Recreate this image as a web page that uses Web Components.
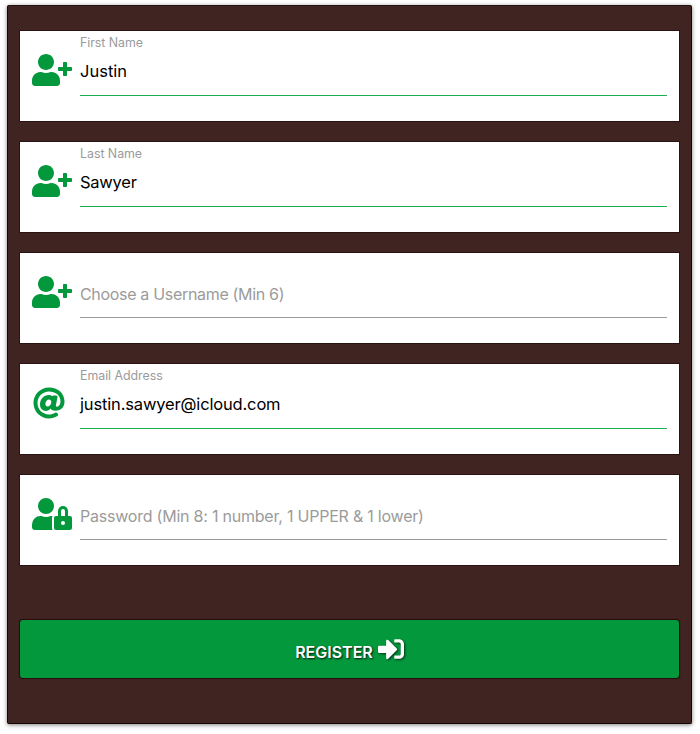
<!DOCTYPE html>
<html lang="en">
<head>
<meta charset="utf-8">
<title>Register</title>
<style>
html,body{margin:0;background:#fff}
body{width:700px;height:734px;overflow:hidden;font-family:Inter,"Liberation Sans",sans-serif}
</style>
</head>
<body>
<register-form>
  <form-field icon="plus" label="First Name" filled style="--space:0px">Justin</form-field>
  <form-field icon="plus" label="Last Name" filled style="--space:-.25px">Sawyer</form-field>
  <form-field icon="plus" style="--space:-.32px">Choose a Username (Min 6)</form-field>
  <form-field icon="at" label="Email Address" filled style="--space:-.16px">justin.sawyer@icloud.com</form-field>
  <form-field icon="lock" style="--space:-.22px">Password (Min 8: 1 number, 1 UPPER &amp; 1 lower)</form-field>
  <register-button slot="action">REGISTER</register-button>
</register-form>
<script>
const glyphs = {
  plus: [640, 'M624 208h-64v-64c0-8.8-7.2-16-16-16h-32c-8.8 0-16 7.2-16 16v64h-64c-8.8 0-16 7.2-16 16v32c0 8.8 7.2 16 16 16h64v64c0 8.8 7.2 16 16 16h32c8.8 0 16-7.2 16-16v-64h64c8.8 0 16-7.2 16-16v-32c0-8.8-7.2-16-16-16zm-400 48c70.7 0 128-57.3 128-128S294.7 0 224 0 96 57.3 96 128s57.3 128 128 128zm89.6 32h-16.7c-22.2 10.2-46.9 16-72.9 16s-50.6-5.8-72.9-16h-16.7C60.2 288 0 348.2 0 422.4V464c0 26.5 21.5 48 48 48h352c26.5 0 48-21.5 48-48v-41.6c0-74.2-60.2-134.4-134.4-134.4z'],
  lock: [640, 'M224 256A128 128 0 1 0 96 128a128 128 0 0 0 128 128zm96 64a63.08 63.08 0 0 1 8.1-30.5c-4.8-.5-9.5-1.5-14.5-1.5h-16.7a174.08 174.08 0 0 1-145.8 0h-16.7A134.43 134.43 0 0 0 0 422.4V464a48 48 0 0 0 48 48h280.9a63.54 63.54 0 0 1-8.9-32zm288-32h-32v-80a80 80 0 0 0-160 0v80h-32a32 32 0 0 0-32 32v160a32 32 0 0 0 32 32h224a32 32 0 0 0 32-32V320a32 32 0 0 0-32-32zM496 432a32 32 0 1 1 32-32 32 32 0 0 1-32 32zm32-144h-64v-80a32 32 0 0 1 64 0z'],
  at: [512, 'M256 8C118.941 8 8 118.919 8 256c0 137.059 110.919 248 248 248 48.154 0 95.342-14.14 135.408-40.223 12.005-7.815 14.625-24.288 5.552-35.372l-10.177-12.433c-7.671-9.371-21.179-11.667-31.373-5.129C325.92 429.757 291.314 440 256 440c-101.458 0-184-82.542-184-184S154.542 72 256 72c100.139 0 184 57.619 184 160 0 38.786-21.093 79.742-58.17 83.693-17.349-.454-16.91-12.857-13.476-30.024l23.433-121.11C394.653 149.75 383.308 136 368.225 136h-44.981a13.518 13.518 0 0 0-13.432 11.993l-.01.092c-14.697-17.901-40.448-21.775-59.971-21.775-74.58 0-137.831 62.234-137.831 151.46 0 65.303 36.785 105.87 96 105.87 26.984 0 57.369-15.637 74.991-38.333 9.522 34.104 40.613 34.104 70.71 34.104C462.609 379.41 504 307.798 504 232 504 95.653 394.023 8 256 8zm-21.68 304.43c-22.249 0-36.07-15.623-36.07-40.771 0-44.993 30.779-72.729 58.63-72.729 22.292 0 35.601 15.241 35.601 40.77 0 45.061-33.875 72.73-58.161 72.73z'],
  enter: [512, 'M416 448h-84c-6.6 0-12-5.4-12-12v-40c0-6.6 5.4-12 12-12h84c17.7 0 32-14.3 32-32V160c0-17.7-14.3-32-32-32h-84c-6.6 0-12-5.4-12-12V76c0-6.6 5.4-12 12-12h84c53 0 96 43 96 96v192c0 53-43 96-96 96zm-47-201L201 79c-15-15-41-4.5-41 17v96H24c-13.3 0-24 10.7-24 24v96c0 13.3 10.7 24 24 24h136v96c0 21.5 26 32 41 17l168-168c9.3-9.4 9.3-24.6 0-34z']
};

class GlyphIcon extends HTMLElement {
  connectedCallback() {
    const [w, d] = glyphs[this.getAttribute('name')];
    this.attachShadow({mode: 'open'}).innerHTML = `
      <style>:host{display:block;height:32px}svg{display:block;height:100%;fill:currentColor}</style>
      <svg viewBox="0 0 ${w} 512" aria-hidden="true"><path d="${d}"/></svg>`;
  }
}

class RegisterForm extends HTMLElement {
  connectedCallback() {
    this.attachShadow({mode: 'open'}).innerHTML = `
      <style>
        :host{display:block;padding:5px 8px 0 7px}
        .panel{box-sizing:border-box;height:719px;padding:25px 12px 0;background:#402422;border:1px solid #180505;border-top-color:#221210;border-radius:2px;box-shadow:0 1px 4px rgba(0,0,0,.5)}
        .fields{display:grid;gap:21px}
        .action{margin-top:55px}
      </style>
      <div class="panel"><div class="fields"><slot></slot></div><div class="action"><slot name="action"></slot></div></div>`;
  }
}

class FormField extends HTMLElement {
  connectedCallback() {
    const label = this.getAttribute('label') || '';
    this.attachShadow({mode: 'open'}).innerHTML = `
      <style>
        :host{display:flex;box-sizing:border-box;height:90px;padding:0 12px;background:#fff;box-shadow:0 0 0 1px #2a1413,0 1px 0 #000,1px 1px 0 #000}
        glyph-icon{box-sizing:border-box;width:48px;margin-top:23px;color:#04983c}
        glyph-icon[name=at]{padding-left:.5px}
        .body{flex:1;box-sizing:border-box;height:65px;border-bottom:1px solid #9b9b9b;color:#9b9b9b}
        :host([filled]) .body{border-color:#19ad50}
        .label{height:26px;font-size:12.4px;line-height:24px;letter-spacing:-.04px}
        .value{font-size:16px;line-height:30px;white-space:nowrap;letter-spacing:var(--space,0)}
        :host([filled]) .value{font-size:16.5px;color:#000;margin-top:-1px}
      </style>
      <glyph-icon name="${this.getAttribute('icon')}"></glyph-icon>
      <div class="body"><div class="label">${label}</div><div class="value"><slot></slot></div></div>`;
  }
}

class RegisterButton extends HTMLElement {
  connectedCallback() {
    this.attachShadow({mode: 'open'}).innerHTML = `
      <style>
        :host{display:block}
        button{display:flex;align-items:center;justify-content:center;gap:5px;width:100%;height:58px;border:0;padding:3px 0 0;border-radius:3px;background:#04983c;color:#fff;font:600 16px/24px Inter,"Liberation Sans",sans-serif;letter-spacing:0;text-shadow:1px 1px 2px rgba(0,0,0,.85);box-shadow:0 0 1px 1px #260b0d}
        span{padding-top:2px}
        glyph-icon{height:26px;margin-top:-3px;filter:drop-shadow(1px 1px 1px rgba(0,0,0,.65))}
      </style>
      <button><span><slot></slot></span><glyph-icon name="enter"></glyph-icon></button>`;
  }
}

customElements.define('glyph-icon', GlyphIcon);
customElements.define('form-field', FormField);
customElements.define('register-button', RegisterButton);
customElements.define('register-form', RegisterForm);
</script>
</body>
</html>
